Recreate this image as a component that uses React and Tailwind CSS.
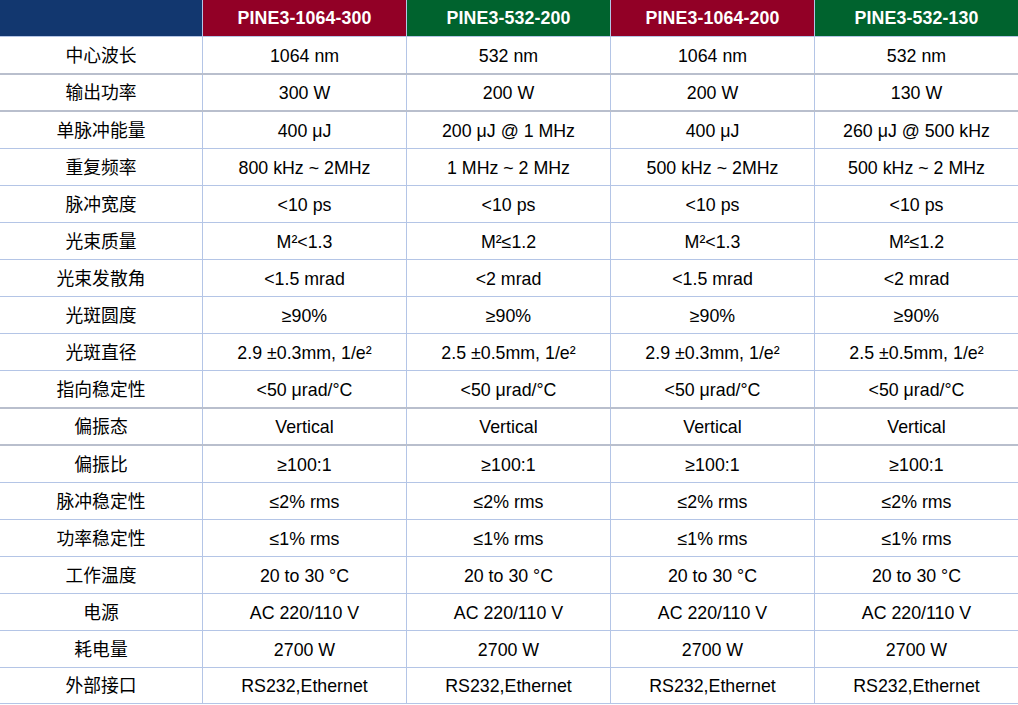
import React from "react";

const models = [
  { name: "PINE3-1064-300", color: "bg-[#920026]" },
  { name: "PINE3-532-200", color: "bg-[#00632e]" },
  { name: "PINE3-1064-200", color: "bg-[#920026]" },
  { name: "PINE3-532-130", color: "bg-[#00632e]" },
];

const rows = [
  ["中心波长", "1064 nm", "532 nm", "1064 nm", "532 nm"],
  ["输出功率", "300 W", "200 W", "200 W", "130 W"],
  ["单脉冲能量", "400 μJ", "200 μJ @ 1 MHz", "400 μJ", "260 μJ @ 500 kHz"],
  ["重复频率", "800 kHz ~ 2MHz", "1 MHz ~ 2 MHz", "500 kHz ~ 2MHz", "500 kHz ~ 2 MHz"],
  ["脉冲宽度", "<10 ps", "<10 ps", "<10 ps", "<10 ps"],
  ["光束质量", "M²<1.3", "M²≤1.2", "M²<1.3", "M²≤1.2"],
  ["光束发散角", "<1.5 mrad", "<2 mrad", "<1.5 mrad", "<2 mrad"],
  ["光斑圆度", "≥90%", "≥90%", "≥90%", "≥90%"],
  ["光斑直径", "2.9 ±0.3mm, 1/e²", "2.5 ±0.5mm, 1/e²", "2.9 ±0.3mm, 1/e²", "2.5 ±0.5mm, 1/e²"],
  ["指向稳定性", "<50 μrad/°C", "<50 μrad/°C", "<50 μrad/°C", "<50 μrad/°C"],
  ["偏振态", "Vertical", "Vertical", "Vertical", "Vertical"],
  ["偏振比", "≥100:1", "≥100:1", "≥100:1", "≥100:1"],
  ["脉冲稳定性", "≤2% rms", "≤2% rms", "≤2% rms", "≤2% rms"],
  ["功率稳定性", "≤1% rms", "≤1% rms", "≤1% rms", "≤1% rms"],
  ["工作温度", "20 to 30 °C", "20 to 30 °C", "20 to 30 °C", "20 to 30 °C"],
  ["电源", "AC 220/110 V", "AC 220/110 V", "AC 220/110 V", "AC 220/110 V"],
  ["耗电量", "2700 W", "2700 W", "2700 W", "2700 W"],
  ["外部接口", "RS232,Ethernet", "RS232,Ethernet", "RS232,Ethernet", "RS232,Ethernet"],
];

// rows whose top line is the heavier grey rule
const thickTop = [1, 2, 10, 11];
// rows that come out a pixel taller in the source
const tall = [2, 11];

const App = () => {
  return (
    <div className="w-[1018px] h-[705px] bg-white font-['Liberation_Sans','Noto_Sans_CJK_SC',sans-serif] text-[17.8px] text-black leading-none overflow-hidden">
      <div className="grid grid-cols-[202px_repeat(4,1fr)] h-[36px]">
        <div className="bg-[#12376f]" />
        {models.map((m) => (
          <div
            key={m.name}
            className={`${m.color} border-l border-[#b4c5e6] flex items-center justify-center pt-[2px] text-white font-bold tracking-[0.1px]`}
          >
            {m.name}
          </div>
        ))}
      </div>
      {rows.map((r, i) => (
        <div
          key={r[0]}
          className={`grid grid-cols-[202px_repeat(4,1fr)] ${
            tall.includes(i) ? "h-[38px]" : "h-[37px]"
          } ${
            thickTop.includes(i)
              ? "border-t-2 border-[#b9bfcd]"
              : "border-t border-[#b4c5e6]"
          } ${i === rows.length - 1 ? "border-b border-b-[#b4c5e6]" : ""}`}
        >
          {r.map((c, j) => (
            <div
              key={j}
              className={`flex items-center justify-center pt-[3px] ${
                j > 0 ? "border-l border-[#b4c5e6]" : ""
              }`}
            >
              {c}
            </div>
          ))}
        </div>
      ))}
    </div>
  );
};

export default App;
